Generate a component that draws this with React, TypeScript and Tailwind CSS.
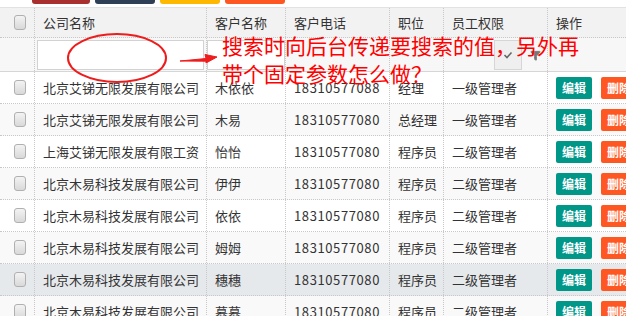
import { Filter } from "lucide-react";

const ROWS = [
  { company: "北京艾锑无限发展有限公司", name: "木依依", phone: "18310577088", job: "经理", level: "一级管理者" },
  { company: "北京艾锑无限发展有限公司", name: "木易", phone: "18310577080", job: "总经理", level: "一级管理者" },
  { company: "上海艾锑无限发展有限工资", name: "怡怡", phone: "18310577080", job: "程序员", level: "二级管理者" },
  { company: "北京木易科技发展有限公司", name: "伊伊", phone: "18310577080", job: "程序员", level: "二级管理者" },
  { company: "北京木易科技发展有限公司", name: "依依", phone: "18310577080", job: "程序员", level: "二级管理者" },
  { company: "北京木易科技发展有限公司", name: "姆姆", phone: "18310577080", job: "程序员", level: "二级管理者" },
  { company: "北京木易科技发展有限公司", name: "穗穗", phone: "18310577080", job: "程序员", level: "二级管理者" },
  { company: "北京木易科技发展有限公司", name: "慕慕", phone: "18310577080", job: "程序员", level: "二级管理者" },
];

const GRID = "grid grid-cols-[35px_172px_79px_104px_54px_104px_140px]";
const CELL = "flex items-center border-r border-dotted border-[#c8c8c8] px-2 overflow-hidden whitespace-nowrap";

function Check() {
  return (
    <span className="block h-[15px] w-[14px] rounded-[3px] border border-[#b0b0b0] bg-gradient-to-b from-[#f3f3f3] to-[#d9d9d9]" />
  );
}

export default function App() {
  return (
    <div
      className="relative h-[316px] w-[626px] overflow-hidden bg-white text-[13px] text-[#333]"
      style={{ fontFamily: '"Noto Sans CJK SC", "Noto Sans", sans-serif' }}
    >
      <div className="flex h-[7px] gap-[5px] pl-[32px]">
        <span className="h-[4px] w-[58px] rounded-b-[3px] bg-[#a8302e]" />
        <span className="h-[4px] w-[60px] rounded-b-[3px] bg-[#2f4056]" />
        <span className="h-[4px] w-[60px] rounded-b-[3px] bg-[#ffb800]" />
        <span className="h-[4px] w-[60px] rounded-b-[3px] bg-[#ff5722]" />
      </div>

      <div className="w-[700px] border-t border-[#e2e2e2]">
        <div className={`${GRID} h-[30px] border-b border-dotted border-[#c8c8c8] bg-[#f2f2f2]`}>
          <div className={`${CELL} pl-[14px]`}><Check /></div>
          <div className={CELL}>公司名称</div>
          <div className={CELL}>客户名称</div>
          <div className={CELL}>客户电话</div>
          <div className={CELL}>职位</div>
          <div className={CELL}>员工权限</div>
          <div className={CELL}>操作</div>
        </div>

        <div className={`${GRID} h-[34px] border-b border-[#d6d6d6] bg-[#f7f7f7]`}>
          <div className="border-r border-dotted border-[#c8c8c8]" />
          <div className="border-r border-dotted border-[#c8c8c8] p-[2px] pb-[1px]">
            <div className="h-full border border-[#d2d2d2] bg-white" />
          </div>
          <div className="border-r border-dotted border-[#c8c8c8] py-[2px] pb-[1px]">
            <div className="h-full border border-[#d2d2d2] bg-white" />
          </div>
          <div className="border-r border-dotted border-[#c8c8c8] p-[2px] pb-[1px]">
            <div className="h-full bg-[#f7f7f7]" />
          </div>
          <div className="border-r border-dotted border-[#c8c8c8]" />
          <div className="flex items-center border-r border-dotted border-[#c8c8c8] py-[2px] pb-[1px]">
            <div className="h-full w-[50px]" />
            <div className="flex h-full w-[28px] items-center justify-center border border-[#d6d6d6] bg-[#efefef] text-[11px] text-[#666]">
              <svg width="10" height="10" viewBox="0 0 10 10">
                <path d="M1.5 5 L4 7.5 L8.5 2.5" fill="none" stroke="#666" strokeWidth="1.6" />
              </svg>
            </div>
            <Filter className="ml-[8px] h-[11px] w-[11px] text-[#777]" fill="#777" />
          </div>
          <div className="border-r border-dotted border-[#c8c8c8]" />
        </div>

        {ROWS.map((r, i) => (
          <div
            key={i}
            className={`${GRID} h-[32px] border-b border-dotted border-[#c8c8c8] ${
              i === 6 ? "bg-[#e6e9ec]" : i % 2 === 1 ? "bg-[#f9f9f9]" : "bg-white"
            }`}
          >
            <div className={`${CELL} pl-[14px]`}><Check /></div>
            <div className={CELL}>{r.company}</div>
            <div className={CELL}>{r.name}</div>
            <div className={`${CELL} tracking-[0.6px]`}>{r.phone}</div>
            <div className={CELL}>{r.job}</div>
            <div className={CELL}>{r.level}</div>
            <div className={`${CELL} gap-[9px]`}>
              <span className="flex h-[22px] items-center rounded-[2px] bg-[#009688] px-[6px] text-[12px] font-bold text-white">编辑</span>
              <span className="flex h-[22px] items-center rounded-[2px] bg-[#ff5722] px-[6px] text-[12px] font-bold text-white">删除</span>
            </div>
          </div>
        ))}
      </div>

      <svg className="pointer-events-none absolute left-0 top-0" width="626" height="316">
        <ellipse cx="117" cy="58" rx="49" ry="24" fill="none" stroke="#ee1c1c" strokeWidth="2" />
        <path d="M180 61 L206 58.5 L205 54.5 L217 57 L206 63 L206 61.2 Z" fill="#ee1c1c" stroke="#ee1c1c" strokeWidth="1" />
      </svg>

      <div className="pointer-events-none absolute left-[222px] top-[31px] text-[21px] leading-[28px] text-[#ff0000]">
        <div>搜索时向后台传递要搜索的值，另外再</div>
        <div>带个固定参数怎么做？</div>
      </div>
    </div>
  );
}
